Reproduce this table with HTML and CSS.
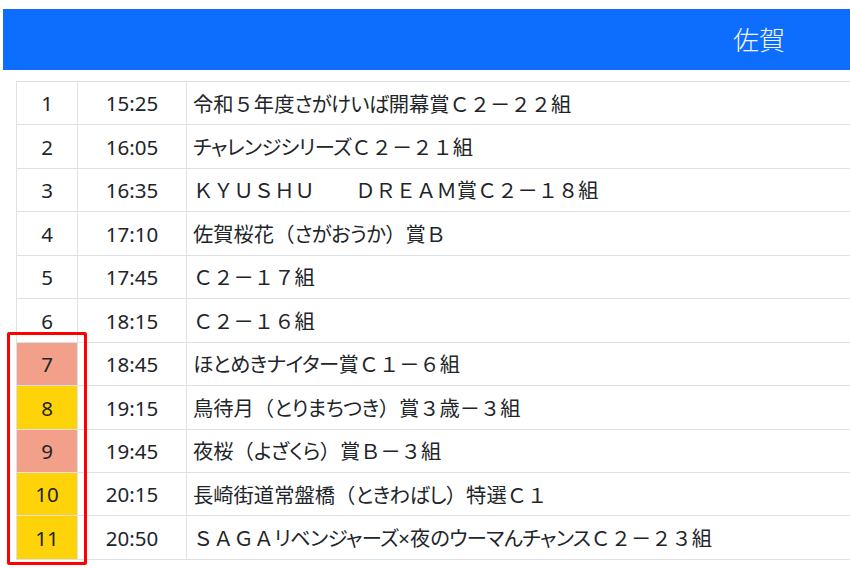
FILE: index.html
```html
<!DOCTYPE html>
<html lang="ja">
<head>
<meta charset="utf-8">
<title>佐賀</title>
<link rel="stylesheet" href="styles.css">
</head>
<body>
<div class="page">
  <header class="venue-bar"><h1 class="venue-name">佐賀</h1></header>
  <div class="races">
    <div class="race"><div class="cell num">1</div><div class="cell time">15:25</div><div class="cell name">令和５年度<span class="kana">さがけいば</span>開幕賞Ｃ２－２２組</div></div>
    <div class="race"><div class="cell num">2</div><div class="cell time">16:05</div><div class="cell name"><span class="kana">チャレンジシリーズ</span>Ｃ２－２１組</div></div>
    <div class="race"><div class="cell num">3</div><div class="cell time">16:35</div><div class="cell name">ＫＹＵＳＨＵ　　ＤＲＥＡＭ賞Ｃ２－１８組</div></div>
    <div class="race"><div class="cell num">4</div><div class="cell time">17:10</div><div class="cell name">佐賀桜花（<span class="kana">さがおうか</span>）賞Ｂ</div></div>
    <div class="race"><div class="cell num">5</div><div class="cell time">17:45</div><div class="cell name">Ｃ２－１７組</div></div>
    <div class="race"><div class="cell num">6</div><div class="cell time">18:15</div><div class="cell name">Ｃ２－１６組</div></div>
    <div class="race"><div class="cell num salmon">7</div><div class="cell time">18:45</div><div class="cell name"><span class="kana">ほとめきナイター</span>賞Ｃ１－６組</div></div>
    <div class="race"><div class="cell num yellow">8</div><div class="cell time">19:15</div><div class="cell name">鳥待月（<span class="kana">とりまちつき</span>）賞３歳－３組</div></div>
    <div class="race"><div class="cell num salmon">9</div><div class="cell time">19:45</div><div class="cell name">夜桜（<span class="kana">よざくら</span>）賞Ｂ－３組</div></div>
    <div class="race"><div class="cell num yellow">10</div><div class="cell time">20:15</div><div class="cell name">長崎街道常盤橋（<span class="kana">ときわばし</span>）特選Ｃ１</div></div>
    <div class="race"><div class="cell num yellow">11</div><div class="cell time">20:50</div><div class="cell name">ＳＡＧＡ<span class="kana">リベンジャーズ</span>×夜<span class="kana">のウーマんチャンス</span>Ｃ２－２３組</div></div>
    <div class="highlight"></div>
  </div>
</div>
</body>
</html>
```
FILE: styles.css
```css
html, body {
  margin: 0;
  padding: 0;
  overflow: hidden;
  background: #ffffff;
}

.page {
  width: 850px;
  height: 568px;
  overflow: hidden;
  font-family: "Noto Sans", "Noto Sans CJK JP", sans-serif;
  color: #212529;
}

.venue-bar {
  margin: 9px 0 0 3px;
  height: 61px;
  background: #0d6efd;
  display: flex;
  align-items: center;
  justify-content: flex-end;
  padding-right: 65px;
  box-sizing: border-box;
}

.venue-name {
  margin: 0;
  font-family: "Noto Sans CJK JP", sans-serif;
  font-weight: 300;
  font-size: 26px;
  line-height: 1;
  color: #f4f8ff;
  position: relative;
  top: -1px;
}

.races {
  position: relative;
  margin: 11px 0 0 16px;
  width: 880px;
  border-bottom: 1px solid #dee2e6;
}

.race {
  display: grid;
  grid-template-columns: 61px 109px 1fr;
  height: 43.45px;
  box-sizing: border-box;
  border-top: 1px solid #dee2e6;
}

.cell {
  border-left: 1px solid #dee2e6;
  display: flex;
  align-items: center;
  font-size: 20.5px;
  line-height: 1;
  padding-top: 1px;
}

.num, .time {
  justify-content: center;
}

.name {
  padding-left: 6px;
  font-family: "Noto Sans", "Noto Sans CJK JP", sans-serif;
  font-size: 20.3px;
  white-space: nowrap;
}

.kana {
  font-feature-settings: "palt";
  letter-spacing: -0.6px;
}

.salmon {
  background: #f2a08a;
}

.yellow {
  background: #ffd30a;
}

.highlight {
  position: absolute;
  left: -9px;
  top: 251px;
  width: 80px;
  height: 233px;
  box-sizing: border-box;
  border: 3px solid #ff0000;
  border-radius: 2px;
}
```
